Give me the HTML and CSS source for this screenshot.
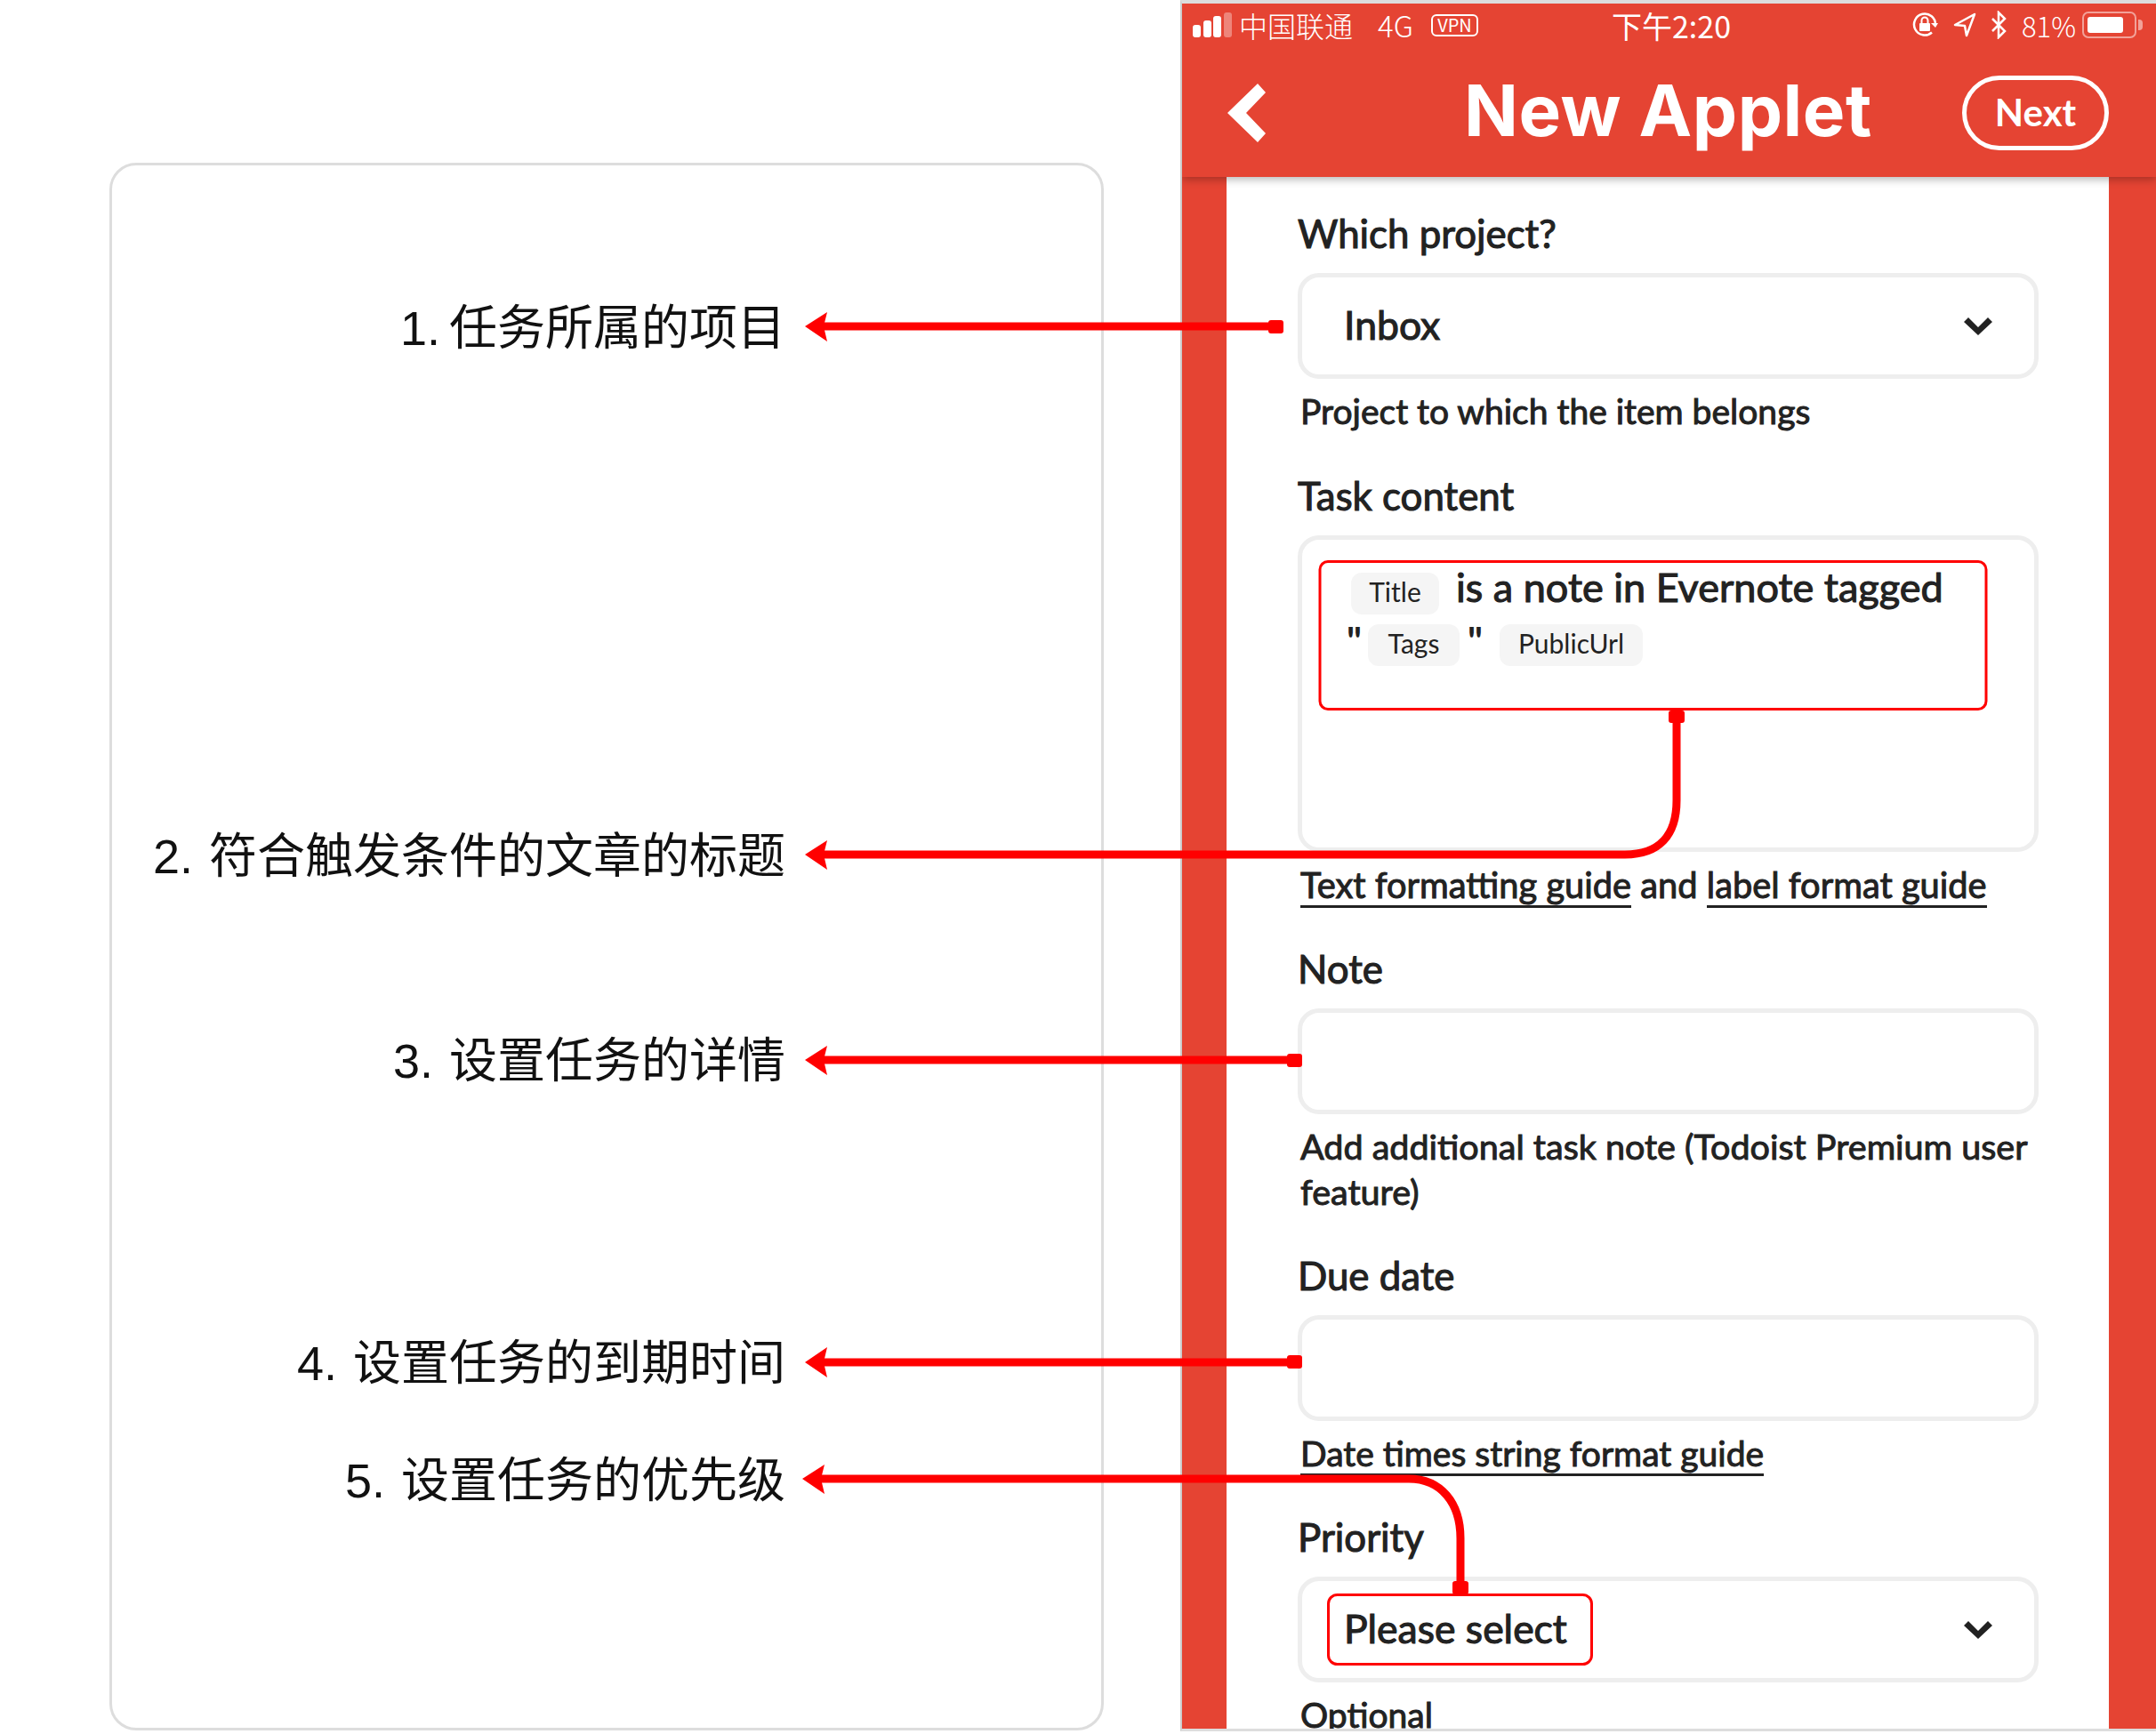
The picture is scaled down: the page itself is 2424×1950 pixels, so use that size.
FILE: index.html
```html
<!DOCTYPE html>
<html lang="zh">
<head>
  <meta charset="utf-8">
  <title>New Applet</title>
  <link rel="stylesheet" href="styles.css">
</head>
<body>
<div class="page">
  <!-- left card with the notes -->
  <div class="card">
    <p class="note note-1">1. 任务所属的项目</p>
    <p class="note note-2">2. 符合触发条件的文章的标题</p>
    <p class="note note-3">3. 设置任务的详情</p>
    <p class="note note-4">4. 设置任务的到期时间</p>
    <p class="note note-5">5. 设置任务的优先级</p>
  </div>

  <!-- phone screenshot -->
  <div class="phone">
    <div class="status">
      <svg class="signal" width="46" height="28" viewBox="0 0 46 28">
        <rect x="0" y="14" width="9" height="14" rx="3" fill="#fff"/>
        <rect x="12" y="9" width="9" height="19" rx="3" fill="#fff"/>
        <rect x="23" y="4" width="9" height="24" rx="3" fill="#fff"/>
        <rect x="35" y="0" width="9" height="28" rx="3" fill="#fff" opacity="0.35"/>
      </svg>
      <span class="carrier">中国联通</span>
      <span class="net">4G</span>
      <span class="vpn">VPN</span>
      <span class="time">下午2:20</span>
      <svg class="rotate" width="29" height="28" viewBox="0 0 29 28">
        <path d="M22 22.5A12 12 0 1 1 26 14" fill="none" stroke="#fff" stroke-width="2.5"/>
        <path d="M21 12l5 5 3-5z" fill="#fff"/>
        <rect x="8" y="12" width="12" height="9" rx="1" fill="#fff"/>
        <path d="M10.5 12V9a3.5 3.5 0 0 1 7 0v3" fill="none" stroke="#fff" stroke-width="2"/>
      </svg>
      <svg class="locate" width="26" height="28" viewBox="0 0 26 28">
        <path d="M24 2L2 14l11 1 2 11z" fill="none" stroke="#fff" stroke-width="2.5" stroke-linejoin="round"/>
      </svg>
      <svg class="blue" width="19" height="32" viewBox="0 0 19 32">
        <path d="M2 9l14 14-7 7V2l7 7L2 23" fill="none" stroke="#fff" stroke-width="2.5"/>
      </svg>
      <span class="pct">81%</span>
      <div class="battery"><div class="battery-level"></div></div>
      <div class="battery-cap"></div>
    </div>

    <div class="nav">
      <svg class="back" width="44" height="66" viewBox="0 0 44 66">
        <polygon points="34,0 43,10 21,33 43,56 34,66 0,33" fill="#fff"/>
      </svg>
      <h1 class="title">New Applet</h1>
      <div class="next">Next</div>
    </div>

    <div class="sheet">
      <div class="lbl lbl-first">Which project?</div>
      <div class="box select">
        <span>Inbox</span>
        <svg width="32" height="20" viewBox="0 0 32 20"><polygon points="0,5 5,0 16,11 27,0 32,5 16,20" fill="#222"/></svg>
      </div>
      <div class="help">Project to which the item belongs</div>

      <div class="lbl">Task content</div>
      <div class="box area">
        <div class="area-line">
          <span class="chip chip-title">Title</span>
          <span class="area-text">is a note in Evernote tagged</span>
        </div>
        <div class="area-line area-line-2">
          <span class="quote">"</span>
          <span class="chip chip-tags">Tags</span>
          <span class="quote quote-end">"</span>
          <span class="chip chip-url">PublicUrl</span>
        </div>
      </div>
      <div class="help help-link help-wide"><a class="link">Text formatting guide</a> and <a class="link">label format guide</a></div>

      <div class="lbl">Note</div>
      <div class="box"></div>
      <div class="help help-note">Add additional task note (Todoist Premium user feature)</div>

      <div class="lbl">Due date</div>
      <div class="box"></div>
      <div class="help help-link"><a class="link">Date times string format guide</a></div>

      <div class="lbl lbl-priority">Priority</div>
      <div class="box select">
        <span>Please select</span>
        <svg width="32" height="20" viewBox="0 0 32 20"><polygon points="0,5 5,0 16,11 27,0 32,5 16,20" fill="#222"/></svg>
      </div>
      <div class="help help-link">Optional</div>
    </div>
  </div>

  <!-- red callouts lie over both columns -->
  <svg class="callouts" width="2424" height="1950" viewBox="0 0 2424 1950">
    <g fill="none" stroke="#f00" stroke-width="9">
      <path d="M925 367H1430"/>
      <path d="M925 961H1827C1865 961 1885 940 1885 900V806"/>
      <path d="M925 1192H1450"/>
      <path d="M925 1532H1450"/>
      <path d="M922 1663H1584C1620 1663 1642 1690 1642 1730V1785"/>
    </g>
    <g fill="#f00">
      <polygon points="905,367 930,351 926,367 930,384"/>
      <polygon points="905,961 930,945 926,961 930,978"/>
      <polygon points="905,1192 930,1176 926,1192 930,1209"/>
      <polygon points="905,1532 930,1515 926,1532 930,1549"/>
      <polygon points="902,1663 927,1647 923,1663 927,1680"/>
      <rect x="1426" y="360" width="17" height="15" rx="3"/>
      <rect x="1876" y="799" width="18" height="14" rx="3"/>
      <rect x="1447" y="1185" width="17" height="15" rx="3"/>
      <rect x="1447" y="1524" width="17" height="15" rx="3"/>
      <rect x="1633" y="1778" width="18" height="15" rx="3"/>
    </g>
    <g fill="none" stroke="#f00" stroke-width="3">
      <rect x="1484" y="631.5" width="749" height="166" rx="9"/>
      <rect x="1493.5" y="1793.5" width="296" height="78" rx="10"/>
    </g>
  </svg>
</div>
</body>
</html>
```

FILE: styles.css
```css
* {
  box-sizing: border-box;
}
body {
  margin: 0;
  background: #fff;
  font-family: "Lato", "Noto Sans CJK SC", sans-serif;
  color: #222;
}
.page {
  position: relative;
  width: 2424px;
  height: 1950px;
  overflow: hidden;
  display: flex;
  align-items: flex-start;
}

/* left card */
.card {
  width: 1118px;
  height: 1763px;
  margin: 183px 0 0 123px;
  padding-right: 355px;
  border: 3px solid #ddd;
  border-radius: 30px;
  flex-shrink: 0;
}
.note {
  margin: 0;
  height: 64px;
  line-height: 64px;
  text-align: right;
  white-space: nowrap;
  word-spacing: 3px;
  font-family: "Liberation Sans", "Noto Sans CJK SC", sans-serif;
  font-size: 54px;
  color: #111;
}
.note-1 { margin-top: 151px; word-spacing: -5px; }
.note-2 { margin-top: 530px; }
.note-3 { margin-top: 166px; }
.note-4 { margin-top: 276px; }
.note-5 { margin-top: 68px; }

/* phone */
.phone {
  width: 1097px;
  height: 1947px;
  margin-left: 86px;
  border-left: 2px solid #ccc;
  border-top: 4px solid #ddd;
  border-bottom: 3px solid #ddd;
  background: #e54433;
  overflow: hidden;
  flex-shrink: 0;
}
.status {
  height: 48px;
  display: flex;
  align-items: center;
  color: #fff;
  font-family: "Noto Sans CJK SC", "Liberation Sans", sans-serif;
  font-weight: 300;
  font-size: 32px;
  white-space: nowrap;
}
.signal { margin-left: 12px; }
.carrier { margin-left: 6px; width: 128px; }
.net { margin-left: 28px; width: 42px; font-size: 33px; }
.vpn {
  margin-left: 18px;
  width: 53px;
  height: 25px;
  border: 2px solid #fff;
  border-radius: 6px;
  font-size: 20px;
  font-weight: 400;
  line-height: 20px;
  text-align: center;
}
.time { margin-left: 150px; width: 132px; font-size: 34px; font-weight: 400; }
.rotate { margin-left: 206px; }
.locate { margin-left: 17px; }
.blue { margin-left: 16px; }
.pct { margin-left: 16px; width: 60px; font-size: 31px; }
.battery {
  margin-left: 8px;
  width: 61px;
  height: 30px;
  padding: 4px;
  border: 2px solid rgba(255, 255, 255, 0.5);
  border-radius: 7px;
}
.battery-level {
  width: 81%;
  height: 100%;
  border-radius: 3px;
  background: #fff;
}
.battery-cap {
  width: 5px;
  height: 12px;
  margin-left: 2px;
  border-radius: 0 4px 4px 0;
  background: rgba(255, 255, 255, 0.5);
}
.nav {
  position: relative;
  z-index: 1;
  height: 147px;
  padding: 0 53px 0 51px;
  display: flex;
  align-items: center;
  background: #e54433;
  box-shadow: 0 3px 9px rgba(0, 0, 0, 0.28);
  clip-path: inset(0 0 -20px 0);
  color: #fff;
}
.back { flex-shrink: 0; margin-top: 3px; }
.title {
  margin: -4px auto 0 222px;
  font-family: "Inter", sans-serif;
  font-size: 80px;
  font-weight: 700;
  letter-spacing: 0.5px;
  white-space: nowrap;
}
.next {
  width: 165px;
  height: 84px;
  margin-top: 3px;
  border: 5px solid #fff;
  border-radius: 42px;
  font-size: 42px;
  font-weight: 700;
  line-height: 72px;
  text-align: center;
}

/* form */
.sheet {
  height: 1760px;
  margin: 0 53px 0 50px;
  padding: 38px 79px 0 80px;
  background: #fff;
}
.lbl {
  height: 50px;
  margin: 44px 0 20px;
  font-size: 43.8px;
  line-height: 50px;
  white-space: nowrap;
  -webkit-text-stroke: 1.1px #222;
}
.lbl-first { margin-top: 0; }
.lbl-priority { margin-top: 43px; }
.box {
  height: 119px;
  border: 5px solid #eee;
  border-radius: 24px;
}
.select {
  padding: 0 48px 0 47px;
  display: flex;
  align-items: center;
  justify-content: space-between;
  font-size: 44.5px;
  -webkit-text-stroke: 1.1px #222;
}
.select span { padding-bottom: 4px; }
.select svg { margin-right: -1px; }
.help {
  margin: 11px 0 0 3px;
  font-size: 39px;
  line-height: 51px;
  -webkit-text-stroke: 1px #222;
}
.help-link { margin-top: 11px; }
.help-wide { font-size: 39.8px; }
.help-note { margin-top: 10px; font-size: 39.5px; }
.link {
  border-bottom: 3px solid #222;
}
.area {
  height: 356px;
  padding: 37px 0 0 55px;
}
.area-line {
  display: flex;
  align-items: flex-start;
}
.area-line-2 {
  margin-top: 11px;
  margin-left: -5px;
}
.chip {
  height: 47px;
  border-radius: 12px;
  background: #f5f5f5;
  font-size: 30px;
  line-height: 43px;
  text-align: center;
}
.chip-title { width: 99px; }
.chip-tags { width: 103px; margin-left: 9px; }
.chip-url { width: 161px; margin-left: 21px; }
.area-text {
  margin: -9px 0 0 19px;
  font-size: 45px;
  line-height: 50px;
  white-space: nowrap;
  -webkit-text-stroke: 1.1px #222;
}
.quote {
  width: 15px;
  margin-top: 1px;
  font-size: 43px;
  font-weight: 700;
  line-height: 36px;
}
.quote-end { margin-left: 9px; }
.callouts {
  position: absolute;
  left: 0;
  top: 0;
  pointer-events: none;
}
```
